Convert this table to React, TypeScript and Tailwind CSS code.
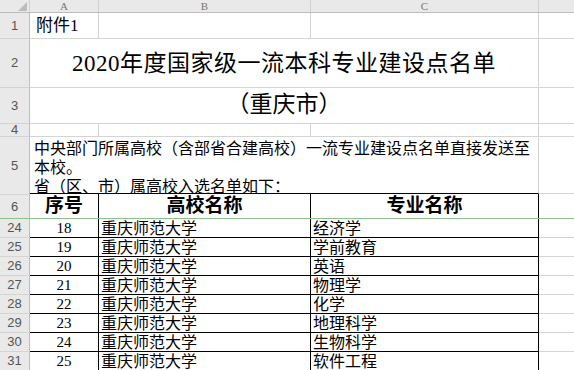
import type { ReactNode } from 'react';

const font = "font-['Liberation_Serif','Noto_Sans_CJK_SC',serif]";

const rows = [
  { n: 24, no: 18, school: '重庆师范大学', major: '经济学' },
  { n: 25, no: 19, school: '重庆师范大学', major: '学前教育' },
  { n: 26, no: 20, school: '重庆师范大学', major: '英语' },
  { n: 27, no: 21, school: '重庆师范大学', major: '物理学' },
  { n: 28, no: 22, school: '重庆师范大学', major: '化学' },
  { n: 29, no: 23, school: '重庆师范大学', major: '地理科学' },
  { n: 30, no: 24, school: '重庆师范大学', major: '生物科学' },
  { n: 31, no: 25, school: '重庆师范大学', major: '软件工程' },
];

function RowHead({ n, noBottom }: { n: number; noBottom?: boolean }) {
  return (
    <div
      className={`w-[30px] shrink-0 flex items-center justify-center bg-[#e9e9e9] border-r border-[#bdbdbd] text-[13px] text-[#555] font-['Liberation_Sans',sans-serif] ${
        noBottom ? '' : 'border-b border-b-[#d4d4d4]'
      }`}
    >
      {n}
    </div>
  );
}

function Row({ h, children }: { h: string; children: ReactNode }) {
  return <div className={`flex ${h}`}>{children}</div>;
}

export default function App() {
  return (
    <div className={`w-[574px] h-[370px] overflow-hidden bg-white text-black ${font}`}>
      {/* column header */}
      <div className="flex h-[13px] bg-[#e9e9e9] border-b border-[#bdbdbd] text-[11px] leading-[12px] text-[#777]">
        <div className="w-[30px] shrink-0 relative border-r border-[#d0d0d0]">
          <svg className="absolute right-[2px] bottom-[1px]" width="9" height="9" viewBox="0 0 9 9">
            <polygon points="9,0 9,9 0,9" fill="#bcbcbc" />
          </svg>
        </div>
        <div className="w-[69px] shrink-0 text-center border-r border-[#d0d0d0]">A</div>
        <div className="w-[212px] shrink-0 text-center border-r border-[#d0d0d0]">B</div>
        <div className="w-[228px] shrink-0 text-center border-r border-[#d0d0d0]">C</div>
        <div className="flex-1" />
      </div>

      {/* row 1 */}
      <Row h="h-[26px]">
        <RowHead n={1} />
        <div className="w-[69px] shrink-0 border-r border-b border-[#d4d4d4] pl-[6px] text-[17px] leading-[26px]">附件1</div>
        <div className="w-[212px] shrink-0 border-r border-b border-[#d4d4d4]" />
        <div className="w-[228px] shrink-0 border-r border-b border-[#d4d4d4]" />
        <div className="flex-1 border-b border-[#d4d4d4]" />
      </Row>

      {/* row 2 */}
      <Row h="h-[49px]">
        <RowHead n={2} />
        <div className="w-[509px] shrink-0 border-r border-b border-[#d4d4d4] flex items-center justify-center pt-[3px] text-[23px] tracking-[0.5px]">
          2020年度国家级一流本科专业建设点名单
        </div>
        <div className="flex-1 border-b border-[#d4d4d4]" />
      </Row>

      {/* row 3 */}
      <Row h="h-[36px]">
        <RowHead n={3} />
        <div className="w-[509px] shrink-0 border-r border-b border-[#d4d4d4] flex items-center justify-center text-[23px]">
          （重庆市）
        </div>
        <div className="flex-1 border-b border-[#d4d4d4]" />
      </Row>

      {/* row 4 */}
      <Row h="h-[13px]">
        <RowHead n={4} />
        <div className="w-[69px] shrink-0 border-r border-b border-[#d4d4d4]" />
        <div className="w-[212px] shrink-0 border-r border-b border-[#d4d4d4]" />
        <div className="w-[228px] shrink-0 border-r border-b border-[#d4d4d4]" />
        <div className="flex-1 border-b border-[#d4d4d4]" />
      </Row>

      {/* row 5 */}
      <Row h="h-[57px]">
        <RowHead n={5} noBottom />
        <div className="w-[509px] shrink-0 border-r border-[#d4d4d4] border-b border-b-black overflow-hidden pl-[4px] pt-[2px] text-[16px] leading-[19px]">
          <div>中央部门所属高校（含部省合建高校）一流专业建设点名单直接发送至</div>
          <div>本校。</div>
          <div>省（区、市）属高校入选名单如下：</div>
        </div>
        <div className="flex-1 border-b border-[#d4d4d4]" />
      </Row>

      {/* row 6 header */}
      <div className="flex h-[25px] border-b border-[#8fc18f]">
        <div className="w-[30px] shrink-0 flex items-center justify-center bg-[#e9e9e9] border-r border-[#bdbdbd] border-t border-t-[#d4d4d4] text-[13px] text-[#555] font-['Liberation_Sans',sans-serif]">
          6
        </div>
        <div className="w-[69px] shrink-0 border-r border-black flex items-center justify-center text-[19px] font-bold">序号</div>
        <div className="w-[212px] shrink-0 border-r border-black flex items-center justify-center text-[19px] font-bold">高校名称</div>
        <div className="w-[228px] shrink-0 border-r border-black flex items-center justify-center text-[19px] font-bold">专业名称</div>
        <div className="flex-1" />
      </div>

      {/* data rows */}
      {rows.map((r) => (
        <Row key={r.n} h="h-[19px]">
          <RowHead n={r.n} />
          <div className="w-[69px] shrink-0 border-r border-b border-black text-center text-[15px] leading-[19px]">{r.no}</div>
          <div className="w-[212px] shrink-0 border-r border-b border-black pl-[2px] text-[16px] leading-[19px] whitespace-nowrap overflow-hidden">{r.school}</div>
          <div className="w-[228px] shrink-0 border-r border-b border-black pl-[2px] text-[16px] leading-[19px] whitespace-nowrap overflow-hidden">{r.major}</div>
          <div className="flex-1 border-b border-[#d4d4d4]" />
        </Row>
      ))}
    </div>
  );
}
